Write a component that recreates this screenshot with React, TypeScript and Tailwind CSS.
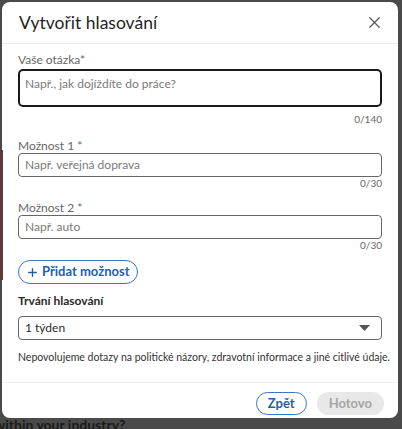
import React from 'react';
import { X, Plus } from 'lucide-react';

const font = { fontFamily: 'Lato, "Open Sans", Arial, sans-serif' };

function Field({ label, placeholder, max, top }: { label: string; placeholder: string; max: number; top: string }) {
  return (
    <div className={top}>
      <label className="block text-[12px] leading-[14px] text-[#666666]">{label}</label>
      <div className="h-[24px] rounded-[4px] border border-[#666666] px-[6px] flex items-center">
        <span className="text-[12px] leading-[16px] text-[#7a7a7a]">{placeholder}</span>
      </div>
      <div className="text-right text-[10px] leading-[12px] text-[#666666]">0/{max}</div>
    </div>
  );
}

export default function App() {
  return (
    <div className="w-[402px] h-[429px] bg-[#4a4a4a] overflow-hidden relative" style={font}>
      <div className="absolute left-0 top-[150px] w-[3px] h-[130px] bg-[#5a3a3a]" />
      <div className="ml-[2px] mt-[2px] w-[396px] h-[416px] bg-white rounded-[8px] flex flex-col overflow-hidden">
        <div className="h-[42px] shrink-0 flex items-center justify-between pl-[17px] pr-[14px] border-b border-[#ececec]">
          <h2 className="text-[17.5px] leading-none text-[#1f1f1f]">Vytvořit hlasování</h2>
          <X className="w-[19px] h-[19px] text-[#555555]" strokeWidth={1.5} />
        </div>

        <div className="px-[16px] pt-[8px] shrink-0">
          <label className="block text-[12px] leading-[16px] text-[#666666]">Vaše otázka*</label>
          <div className="mt-[1px] h-[38px] rounded-[5px] border-2 border-[#1a1a1a] px-[5px] pt-[5px]">
            <div className="text-[12px] leading-[16px] text-[#7a7a7a]">Např., jak dojíždíte do práce?</div>
          </div>
          <div className="text-right text-[10px] leading-[14px] text-[#666666] mt-[5px]">0/140</div>

          <Field top="mt-[13px]" label="Možnost 1 *" placeholder="Např. veřejná doprava" max={30} />
          <Field top="mt-[12px]" label="Možnost 2 *" placeholder="Např. auto" max={30} />

          <button className="mt-[9px] h-[24px] px-[7px] rounded-full border border-[#3b76c4] text-[#1f5fae] text-[13px] font-bold flex items-center gap-[3px]">
            <Plus className="w-[13px] h-[13px]" strokeWidth={2.5} />
            Přidat možnost
          </button>

          <div className="mt-[9px] text-[12px] leading-[16px] font-bold text-[#2a2a2a]">Trvání hlasování</div>
          <div className="mt-[7px] h-[24px] rounded-[4px] border border-[#666666] px-[6px] flex items-center justify-between">
            <span className="text-[12px] leading-[16px] text-[#2a2a2a]">1 týden</span>
            <svg width="11" height="6" viewBox="0 0 11 6" className="mr-[5px]">
              <path d="M0 0h11L5.5 6z" fill="#555555" />
            </svg>
          </div>

          <p className="mt-[9px] text-[10.5px] leading-[16px] text-[#333333] whitespace-nowrap">
            Nepovolujeme dotazy na politické názory, zdravotní informace a jiné citlivé údaje.
          </p>
        </div>

        <div className="mt-[17px] shrink-0 border-t border-[#ececec] flex justify-end gap-[10px] pr-[14px] pt-[9px]">
          <button className="h-[23px] px-[11px] rounded-full border border-[#3b76c4] text-[#1f5fae] text-[13px] font-bold">
            Zpět
          </button>
          <button className="h-[23px] px-[12px] rounded-full bg-[#e8e8e8] text-[#a6a6a6] text-[13px] font-bold">
            Hotovo
          </button>
        </div>
      </div>
      <div className="absolute left-[-6px] top-[417px] text-[14px] leading-[16px] text-[#1a1a1a] font-bold">within your industry?</div>
    </div>
  );
}
